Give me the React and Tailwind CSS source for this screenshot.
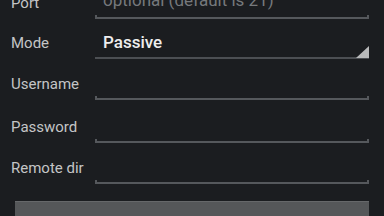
export default function App() {
  const rows = [
    { label: "Port", h: "h-[40px]", hint: "optional (default is 21)" },
    { label: "Mode", h: "h-[40px]", value: "Passive", spinner: true },
    { label: "Username", h: "h-[41px]" },
    { label: "Password", h: "h-[43px]" },
    { label: "Remote dir", h: "h-[41px]" },
  ];

  return (
    <div className="w-[384px] h-[216px] overflow-hidden bg-[#1b1d20] font-['Roboto',sans-serif]">
      <div className="mt-[-21px] pl-[11px] pr-[15px]">
        {rows.map((r) => (
          <div key={r.label} className={`flex items-end ${r.h}`}>
            <div className="w-[84px] pb-[8px] text-[15px] text-[#c4c5c6] leading-none">
              {r.label}
            </div>
            <div className="flex-1 relative">
              <div className="pl-[8px] pb-[6px] h-[24px] flex items-end">
                {r.hint && (
                  <span className="text-[17px] text-[#76797c] leading-none">{r.hint}</span>
                )}
                {r.value && (
                  <span className="text-[17px] font-medium text-[#eeeeee] leading-none">{r.value}</span>
                )}
              </div>
              {r.spinner ? (
                <div className="h-[2px] bg-[#4c4f53]" />
              ) : (
                <div className="h-[4px] border-b-2 border-x-2 border-[#55585c]" />
              )}
              {r.spinner && (
                <svg className="absolute right-0 bottom-[1px]" width="13" height="12" viewBox="0 0 13 12">
                  <polygon points="13,0 13,12 0,12" fill="#b9babb" />
                </svg>
              )}
            </div>
          </div>
        ))}
        <div className="mt-[17px] ml-[4px] h-[30px] bg-[#555759] border-t border-[#66686a]" />
      </div>
    </div>
  );
}
